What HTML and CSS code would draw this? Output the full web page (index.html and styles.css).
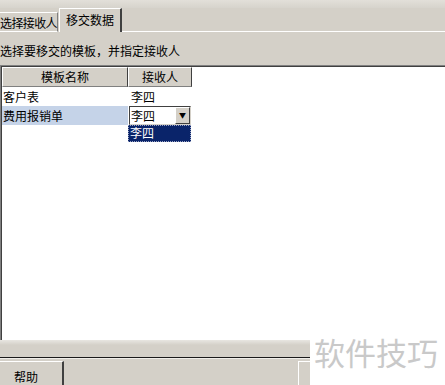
FILE: index.html
```html
<!DOCTYPE html>
<html lang="zh-CN">
<head>
    <meta charset="UTF-8">
    <title>移交数据</title>
    <link rel="stylesheet" href="styles.css">
</head>
<body>
    <div class="window">
        <div class="top-strip"></div>
        <div class="tabs">
            <div class="tab">选择接收人</div>
            <div class="tab active">移交数据</div>
            <div class="tab-rest"></div>
        </div>
        <div class="hint">选择要移交的模板，并指定接收人</div>
        <div class="grid-area">
            <div class="grid">
                <div class="head">模板名称</div>
                <div class="head">接收人</div>
                <div class="cell">客户表</div>
                <div class="cell">李四</div>
                <div class="cell selected">费用报销单</div>
                <div class="cell combo-cell">
                    <div class="combo">
                        <span class="combo-text">李四</span>
                        <span class="combo-btn">&#9660;</span>
                    </div>
                    <div class="drop-list"><span>李四</span></div>
                </div>
            </div>
        </div>
        <div class="footer">
            <div class="footer-line"></div>
            <div class="buttons">
                <button class="btn">帮助</button>
                <div class="spacer"></div>
                <button class="btn btn-right"></button>
            </div>
        </div>
        <div class="watermark">软件技巧</div>
    </div>
</body>
</html>
```

FILE: styles.css
```css
body {
    margin: 0;
    font-family: "Noto Sans CJK SC", "Liberation Sans", sans-serif;
    font-size: 12px;
    color: #000;
    background-color: #d4d0c8;
}
.window {
    position: relative;
    width: 445px;
    height: 385px;
    display: flex;
    flex-direction: column;
    overflow: hidden;
}
.top-strip {
    height: 8px;
    background: linear-gradient(#e2dfd9, #d6d3cc);
}
.tabs {
    height: 24px;
    display: flex;
    align-items: flex-end;
}
.tab {
    height: 20px;
    line-height: 19px;
    width: 58px;
    border-top: 1px solid #fff;
    border-right: 1px solid #808080;
    border-bottom: 1px solid #fff;
    box-sizing: border-box;
    white-space: nowrap;
    letter-spacing: -0.6px;
}
.tab.active {
    height: 24px;
    line-height: 22px;
    width: 63px;
    margin-left: 1px;
    padding-left: 6px;
    letter-spacing: 0;
    border-left: 1px solid #fff;
    border-right: 2px solid #404040;
    border-bottom: none;
}
.tab-rest {
    flex: 1;
    height: 24px;
    border-bottom: 1px solid #fff;
    box-sizing: border-box;
}
.hint {
    height: 33px;
    line-height: 37px;
    white-space: nowrap;
}
.grid-area {
    height: 277px;
    background-color: #fff;
    border-top: 1px solid #808080;
    border-left: 1px solid #808080;
    box-shadow: inset 1px 1px 0 #404040;
    box-sizing: border-box;
    padding: 1px 0 0 1px;
}
.grid {
    display: grid;
    grid-template-columns: 126px 64px;
    grid-template-rows: 20px 19px 19px;
}
.head {
    background-color: #d4d0c8;
    border-top: 1px solid #fff;
    border-left: 1px solid #fff;
    border-right: 1px solid #404040;
    border-bottom: 1px solid #808080;
    text-align: center;
    line-height: 18px;
}
.cell {
    line-height: 19px;
    padding-left: 1px;
    white-space: nowrap;
}
.cell:nth-child(even) {
    padding-left: 3px;
}
.selected {
    background-color: #c5d3e8;
}
.combo-cell {
    position: relative;
    padding-left: 0 !important;
}
.combo {
    display: flex;
    height: 19px;
    width: 62px;
    margin-left: 1px;
    box-sizing: border-box;
    border-top: 1px solid #404040;
    border-left: 1px solid #404040;
    border-right: 1px solid #d4d0c8;
    border-bottom: 1px solid #d4d0c8;
    background-color: #fff;
}
.combo-text {
    flex: 1;
    line-height: 17px;
    padding-left: 1px;
}
.combo-btn {
    width: 15px;
    background-color: #d4d0c8;
    border-top: 1px solid #fff;
    border-left: 1px solid #fff;
    border-right: 1px solid #404040;
    border-bottom: 1px solid #404040;
    box-sizing: border-box;
    font-size: 7px;
    line-height: 15px;
    text-align: center;
}
.drop-list {
    position: absolute;
    left: 0;
    top: 19px;
    width: 63px;
    height: 17px;
    box-sizing: border-box;
    background-color: #0a246a;
    border: 1px dotted #9aa4c4;
    color: #fff;
    line-height: 14px;
    padding-left: 1px;
}
.footer {
    flex: 1;
    background: linear-gradient(#e8e6e1, #d4d0c8 5px);
}
.footer-line {
    height: 17px;
    border-bottom: 1px solid #1a1a1a;
    box-shadow: 0 1px 0 #f0eee9;
}
.buttons {
    display: flex;
    padding-top: 3px;
}
.btn {
    width: 64px;
    height: 24px;
    margin: 0;
    padding: 6px 0 0 0;
    font-family: "Noto Sans CJK SC", "Liberation Sans", sans-serif;
    font-size: 12px;
    line-height: 14px;
    background-color: #d4d0c8;
    border-top: 1px solid #fff;
    border-left: none;
    border-right: 2px solid #404040;
    border-bottom: none;
    text-indent: -10px;
    vertical-align: top;
}
.spacer {
    width: 234px;
}
.btn-right {
    border-left: 1px solid #fff;
    border-right: none;
}
.watermark {
    position: absolute;
    right: 0;
    bottom: 0;
    width: 135px;
    height: 54px;
    background-color: #fff;
    color: #c9c9c9;
    font-size: 31px;
    line-height: 42px;
    padding-left: 4px;
    box-sizing: border-box;
    white-space: nowrap;
}
```
